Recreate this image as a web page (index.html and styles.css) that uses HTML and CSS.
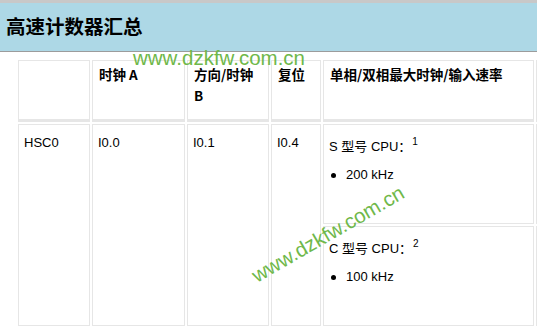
FILE: index.html
```html
<!DOCTYPE html>
<html lang="zh-CN">
<head>
<meta charset="utf-8">
<title>高速计数器汇总</title>
<link rel="stylesheet" href="styles.css">
</head>
<body>
<header class="titlebar"><h1 class="title">高速计数器汇总</h1></header>
<main class="content">
  <div class="grid">
    <div class="cell head"></div>
    <div class="cell head">时钟 A</div>
    <div class="cell head">方向/时钟 B</div>
    <div class="cell head">复位</div>
    <div class="cell head">单相/双相最大时钟/输入速率</div>
    <div class="cell head edge"></div>

    <div class="cell span2">HSC0</div>
    <div class="cell span2">I0.0</div>
    <div class="cell span2">I0.1</div>
    <div class="cell span2">I0.4</div>
    <div class="cell rate">
      <p class="cpu">S 型号 CPU：<sup class="note">1</sup></p>
      <ul class="speeds"><li class="speed">200 kHz</li></ul>
    </div>
    <div class="cell edge"></div>
    <div class="cell rate">
      <p class="cpu">C 型号 CPU：<sup class="note">2</sup></p>
      <ul class="speeds"><li class="speed">100 kHz</li></ul>
    </div>
    <div class="cell edge"></div>
  </div>
</main>
<div class="watermark wm-flat">www.dzkfw.com.cn</div>
<div class="watermark wm-tilt">www.dzkfw.com.cn</div>
</body>
</html>
```
FILE: styles.css
```css
html, body {
  margin: 0;
  padding: 0;
}
body {
  width: 537px;
  height: 327px;
  overflow: hidden;
  position: relative;
  background: #fff;
  color: #000;
  font-family: "Liberation Sans", "Noto Sans CJK SC", sans-serif;
  font-size: 13px;
}
.titlebar {
  border-top: 3px solid #c8c8c8;
  border-bottom: 1px solid #9c9c9c;
  background: #add8e6;
  height: 48px;
  display: flex;
  align-items: center;
  padding-left: 6px;
}
.title {
  margin: 0;
  font-family: "Noto Sans CJK SC", sans-serif;
  font-size: 19.5px;
  font-weight: 700;
  line-height: 1;
  position: relative;
  top: -1px;
}
.content {
  padding: 8px 0 0 18px;
}
.grid {
  display: grid;
  grid-template-columns: 72px 93px 82px 50px 211px 1px;
  grid-template-rows: 62px 100px 100px;
  gap: 2px;
}
.cell {
  box-sizing: border-box;
  border: 1px solid #e6e6e6;
  padding: 8px 5px 0 5px;
  line-height: 20px;
}
.head {
  border-bottom: 3px solid #e6e6e6;
  padding: 3px 6px 0 6px;
  font-family: "Noto Sans CJK SC", sans-serif;
  font-weight: 700;
  font-size: 13.5px;
  line-height: 21px;
}
.edge {
  border-right: 0;
  padding: 0;
}
.span2 {
  grid-row: span 2;
}
.rate {
  padding-top: 12px;
}
.cpu {
  margin: 0;
  line-height: 20px;
}
.note {
  font-size: 10px;
  line-height: 0;
  vertical-align: 6px;
  margin-left: 1px;
}
.speeds {
  list-style: none;
  margin: 8px 0 0 0;
  padding: 0;
}
.speed {
  line-height: 20px;
  display: flex;
  align-items: center;
}
.speed::before {
  content: "";
  width: 5px;
  height: 5px;
  border-radius: 50%;
  background: #000;
  margin: 0 10px 0 2px;
}
.watermark {
  position: absolute;
  font-family: "Liberation Sans", sans-serif;
  font-size: 20.5px;
  line-height: 1;
  color: #6fb84a;
  white-space: nowrap;
}
.wm-flat {
  left: 133px;
  top: 48px;
}
.wm-tilt {
  left: 257px;
  top: 266px;
  transform-origin: 0 17px;
  transform: rotate(-30deg);
}
```
